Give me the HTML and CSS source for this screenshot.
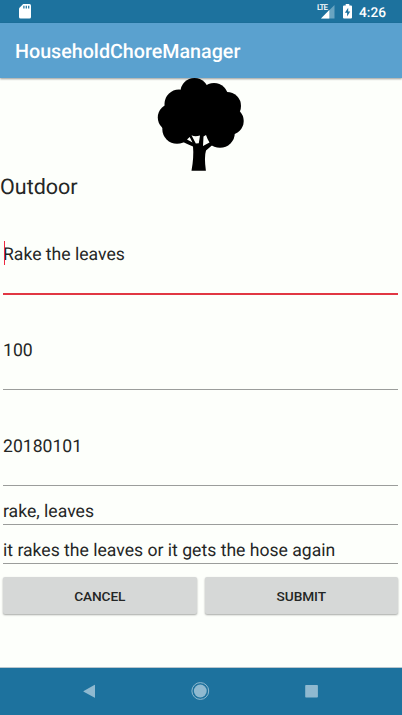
FILE: index.html
```
<!DOCTYPE html>
<html lang="en">
<head>
<meta charset="utf-8">
<title>HouseholdChoreManager</title>
<link rel="stylesheet" href="styles.css">
</head>
<body>
<div class="screen">
  <header class="status">
    <svg class="sd" width="12" height="15" viewBox="0 0 12 15"><path fill="#fff" d="M4.2 0H10.5Q12 0 12 1.5V13Q12 14.5 10.5 14.5H1.5Q0 14.5 0 13V4.2Z"/><path fill="#1d729e" d="M4.3 1.8h1.2v2.7H4.3zM6.7 1.8h1.2v2.7H6.7zM9.1 1.8h1.2v2.7H9.1z"/></svg>
    <div class="status-right">
      <div class="network">
        <svg width="18" height="16" viewBox="0 0 18 16"><path fill="#69a4c1" d="M17.5 1V14.500H4Z"/><path fill="#fff" d="M4 14.500L12.3 6V14.500Z"/></svg>
        <span class="lte">LTE</span>
      </div>
      <svg class="battery" width="9" height="15" viewBox="0 0 9 15"><path fill="#fff" d="M2.7 0h3.6v1.5H8Q9 1.5 9 2.5V13.5Q9 14.5 8 14.5H1Q0 14.5 0 13.5V2.5Q0 1.5 1 1.5H2.7Z"/><path fill="#1d729e" d="M5.2 3.8L1.9 8.7H4.1V12.4L7.2 7.4H5.2Z"/></svg>
      <span class="clock">4:26</span>
    </div>
  </header>
  <div class="appbar"><h1>HouseholdChoreManager</h1></div>
  <main class="content">
    <svg class="tree" width="88" height="94" viewBox="157 77 88 94">
      <circle cx="194.5" cy="92" r="14"/><circle cx="214" cy="97" r="14"/><circle cx="227" cy="106" r="14"/><circle cx="230" cy="121" r="13.7"/><circle cx="220" cy="133" r="14.8"/><circle cx="177" cy="129" r="14.7"/><circle cx="171.5" cy="117.5" r="13.7"/><circle cx="179" cy="104" r="14.5"/><circle cx="199" cy="114" r="23"/>
      <path d="M183 126H214L213 144.500L206 150.500Q204 157 205.900 170.700H191.500Q194 157 193 146.500Q188 144.500 183 142Z"/>
      <path fill="#fdfffb" d="M187 139.500L189.700 137L192.500 142.500ZM191.500 135.300Q195 137 200 135.500L198.800 143.200L195.800 143.500ZM203.500 136.500L206 135Q207.500 139.500 209.500 142.500L203 146Z"/>
    </svg>
    <h2>Outdoor</h2>
    <div class="field tall first focused"><span class="caret"></span><span>Rake the leaves</span></div>
    <div class="field tall second"><span>100</span></div>
    <div class="field tall"><span>20180101</span></div>
    <div class="field short"><span>rake, leaves</span></div>
    <div class="field short"><span>it rakes the leaves or it gets the hose again</span></div>
    <div class="actions"><button>CANCEL</button><button>SUBMIT</button></div>
  </main>
  <nav class="navbar">
    <svg width="402" height="47" viewBox="0 668 402 47"><g fill="#8fb9d0"><path d="M83.700 691L94.300 685Q95 684.600 95 685.400V697.200Q95 698 94.300 697.600L83.700 691.800Q83 691.400 83.700 691Z"/><circle cx="200.300" cy="691" r="6.400"/><circle cx="200.300" cy="691" r="8.400" fill="none" stroke="#8fb9d0" stroke-width="1"/><rect x="305.200" y="685" width="12.700" height="12.500" rx=".8"/></g></svg>
  </nav>
</div>
</body>
</html>
```
FILE: styles.css
```
* { box-sizing: border-box; }
body { margin: 0; font-family: Roboto, sans-serif; color: #242625; background: #fdfffb; text-rendering: geometricPrecision; }
svg { display: block; }
.screen { width: 402px; height: 715px; display: flex; flex-direction: column; overflow: hidden; }
.status { height: 23px; flex: none; background: #1d729e; display: flex; justify-content: space-between; padding: 4px 16px 0 19px; color: #fff; }
.status-right { display: flex; align-items: flex-start; }
.network { position: relative; margin-right: 8px; }
.lte { position: absolute; left: 0; top: 0; font-size: 8px; line-height: 8px; font-weight: 500; letter-spacing: -.9px; }
.battery { margin-right: 7px; }
.clock { font-size: 13.7px; line-height: 18px; font-weight: 500; }
.appbar { height: 55px; flex: none; background: #5aa1cf; display: flex; align-items: center; padding: 2px 15px 0; box-shadow: 0 1px 2px rgba(0,0,0,.4); }
h1 { margin: 0; color: #fff; font-size: 19.7px; line-height: 24px; font-weight: 500; }
.content { flex: 1; display: flex; flex-direction: column; position: relative; }
.tree { align-self: center; margin-top: -1px; flex: none; }
h2 { margin: 4px 0 -1px; font-size: 21.5px; line-height: 26px; font-weight: 400; }
.field { flex: none; position: relative; margin: 0 4px 0 3px; font-size: 17.6px; line-height: 22px; border-bottom: 1px solid #9b9d9b; white-space: nowrap; display: flex; align-items: flex-end; }
.tall { height: 96px; padding-bottom: 27px; }
.first { height: 95px; padding-bottom: 27px; }
.second { height: 95px; }
.focused { border-bottom: 2px solid #e13743; }
.caret { position: absolute; left: 1px; top: 41px; width: 1px; height: 24px; background: #ee2941; }
.short { height: 39px; padding-bottom: 1px; }
.actions { display: grid; grid-template-columns: 1fr 1fr; gap: 8px; margin: 13px 4px 0 3px; }
button { height: 37px; border: 0; border-radius: 2px; background: #d6d8d7; color: #242625; font: 500 13.7px/20px Roboto, sans-serif; letter-spacing: -.1px; box-shadow: 0 1px 2px rgba(0,0,0,.35); padding: 0; }
.navbar { height: 48px; flex: none; background: #1d729e; border-top: 1px solid #bac7ce; }
```
